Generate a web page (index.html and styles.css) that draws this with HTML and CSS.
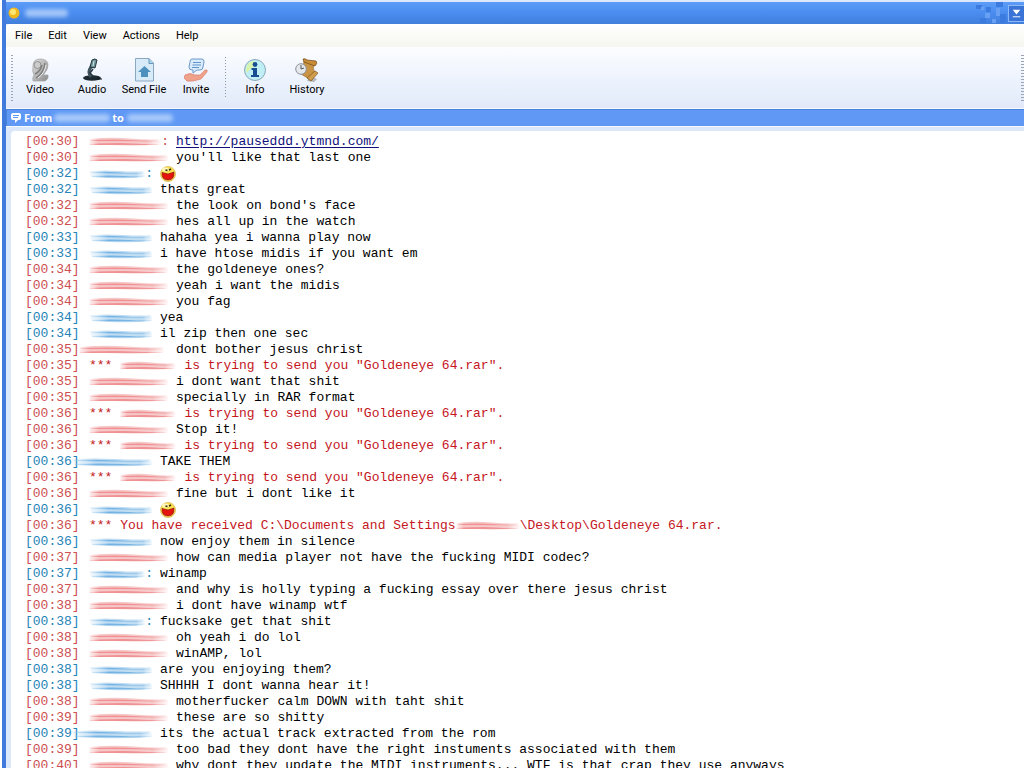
FILE: index.html
```html
<!DOCTYPE html>
<html lang="en">
<head>
<meta charset="utf-8">
<title>Conversation</title>
<link rel="stylesheet" href="styles.css">
<script src="chat.js" defer></script>
</head>
<body>
<svg class="defs" aria-hidden="true">
  <defs>
    <linearGradient id="fadeRed"><stop offset="0" stop-color="#f3a0a0" stop-opacity=".3"/><stop offset=".12" stop-color="#ef8f91"/><stop offset=".8" stop-color="#ef9596"/><stop offset="1" stop-color="#f6b3b3" stop-opacity=".15"/></linearGradient>
    <linearGradient id="fadeBlue"><stop offset="0" stop-color="#8ec4ec" stop-opacity=".2"/><stop offset=".3" stop-color="#74b3e3"/><stop offset=".85" stop-color="#74b3e3"/><stop offset="1" stop-color="#a9d2f2" stop-opacity=".3"/></linearGradient>
    <symbol id="red" viewBox="0 0 80 12" preserveAspectRatio="none">
      <path d="M1 3Q25 1 45 2.500T78 3L80 8.500Q50 10 25 9T0 9.500Z" fill="url(#fadeRed)" opacity=".5"/>
      <path d="M2 4Q30 3 45 4T76 4.500L79 5.500Q50 5 2 5ZM1 8Q35 6.500 50 7.500T78 8L76 9Q40 9 1 9Z" fill="url(#fadeRed)"/>
    </symbol>
    <symbol id="blue" viewBox="0 0 64 12" preserveAspectRatio="none">
      <path d="M0 3Q18 2 35 3T62 3L64 9Q42 11 22 10T3 9Z" fill="url(#fadeBlue)" opacity=".45"/>
      <path d="M2 4Q20 3.500 35 4.500T61 4.500V5.500Q30 5.500 2 5ZM3 8Q25 7 40 8T62 8V9Q30 9.500 3 9Z" fill="url(#fadeBlue)"/>
    </symbol>
    <symbol id="smile" viewBox="0 0 16 16">
      <circle cx="8" cy="8" r="7.500" fill="#f9e04f" stroke="#e3c46a"/>
      <ellipse cx="5.500" cy="3.500" rx="3.500" ry="2" fill="#fff7b8"/>
      <path d="M2 6.500L8 8 14 6Q14.500 14 8 14T2 6.500Z" fill="#e5140f" stroke="#7a1408" stroke-width=".6"/>
      <path d="M5.500 4L7.500 4.500M9 4L11 3" stroke="#3a2b00" stroke-width="1.500"/>
    </symbol>
  </defs>
</svg>
<div class="window">
  <header class="titlebar">
    <svg class="orb" viewBox="0 0 12 12"><circle cx="6" cy="6" r="5.500" fill="#f0b820"/><circle cx="5" cy="5" r="3" fill="#ffe673"/></svg>
    <span class="haze title-haze"></span>
    <svg class="pixels" viewBox="0 0 32 22"><path fill="#3b7bdf" d="M0 3h6v4H0zM10 5h5v5h-5zM20 0h7v5h-7zM4 16h6v5H4zM24 12h6v9h-6z"/><path fill="#68a1f4" d="M9 11h5v5H9zM20 6h4v8h-4zM5 5h3v3H5zM16 17h4v4h-4z"/></svg>
    <button class="min" aria-label="Minimize"><svg viewBox="0 0 16 16"><path d="M4 4h8L8 9Z" fill="#fff"/><path d="M4 11.500h8" stroke="#fff"/></svg></button>
  </header>
  <nav class="menu">
    <button>File</button><button>Edit</button><button>View</button><button>Actions</button><button>Help</button>
  </nav>
  <div class="toolbar">
    <span class="grip"></span>
    <button class="tool"><svg viewBox="0 0 24 24"><defs><linearGradient id="metal" x2="1" y2="1"><stop offset="0" stop-color="#e2e2e2"/><stop offset="1" stop-color="#8b8b8b"/></linearGradient></defs><path d="M5 8Q5 1 12 1Q20 1 20 7Q20 12 15 17L20 17Q21 21 17 23L5 23Q4 20 6 17Q4 14 5 8Z" fill="url(#metal)" stroke="#a2a2a2" stroke-width=".7"/><circle cx="9.500" cy="7" r="3.500" fill="#ccc" stroke="#929292"/><path d="M8 20Q16 15 17 5M7 16Q12 14 14 7" fill="none" stroke="#7c7c7c" stroke-width="1.400"/><path d="M10 20Q17 15 18 7" fill="none" stroke="#ececec"/></svg>Video</button>
    <button class="tool"><svg viewBox="0 0 24 24"><ellipse cx="12" cy="20" rx="9" ry="2.800" fill="#1c2830"/><path d="M17 21H22" stroke="#111"/><path d="M11 19Q7 14 11 9L14 3" fill="none" stroke="#41545d" stroke-width="3"/><path d="M12 2Q15 0 17 2L15 10 10 9Z" fill="#6d9298" stroke="#23343c"/><path d="M13 11L10 15 14 19" fill="none" stroke="#24363f" stroke-width="1.500"/><path d="M14 3L13 8" stroke="#cce8e8"/></svg>Audio</button>
    <button class="tool"><svg viewBox="0 0 24 24"><path d="M3.500 .5H17L21.500 5V23H3.500Z" fill="#d7eaf8" stroke="#8aa8c0"/><path d="M17 .5V5.500H21" fill="#a6d4ef" stroke="#6796b9"/><path d="M12.500 8L19 14H16V19H9V14H6Z" fill="#4c91bd"/></svg>Send File</button>
    <button class="tool"><svg viewBox="0 0 24 24"><path d="M1 17Q6 14 11 17L16 17 21 12Q24 11 23 14L17 21Q8 24 3 23L0 20Z" fill="#efa189" stroke="#d88370" stroke-width=".7"/><path d="M8 1H18Q20 1 20 4L19 9Q19 12 16 12H13L9 15 9 12H8Q5 12 5 9L6 4Q6 1 8 1Z" fill="#d9ebfb" stroke="#6d9acb"/><path d="M9 4.500H17M8.500 7H17M8 9.500H15" stroke="#5e95cd"/></svg>Invite</button>
    <span class="divider"></span>
    <button class="tool"><svg viewBox="0 0 24 24"><circle cx="12" cy="12" r="10.500" fill="#bfeff5" stroke="#8aa9b8"/><path d="M3 13Q3 3 12 3L11 9Q7 10 4 15Z" fill="#d8f3ad"/><circle cx="12" cy="6.500" r="2.400" fill="#164e91"/><path d="M8.500 10H14V17H16V19H8V17H10V12H8.500Z" fill="#164e91"/></svg>Info</button>
    <button class="tool"><svg viewBox="0 0 24 24"><path d="M12 23L19 24 22 21 15 18Z" fill="#777" opacity=".5"/><path d="M9 3L19 6Q17 10 20 15L16 22 6 16Q9 9 9 3Z" fill="#c99443" stroke="#99682b" stroke-width=".7"/><path d="M8 1Q10 0 12 2L21 3Q23 5 20 8L9 4Z" fill="#c98d35" stroke="#70491a" stroke-width=".7"/><path d="M20 13L23 15 16 23 12 20Z" fill="#d19d4a" stroke="#7d5521" stroke-width=".7"/><circle cx="6" cy="11" r="5.300" fill="#e4e8ec" stroke="#8d9399"/><path d="M6 7V11L9 10" fill="none" stroke="#555"/></svg>History</button>
    <span class="grip right"></span>
  </div>
  <div class="banner">
    <svg class="bubble" viewBox="0 0 10 11"><path d="M2 0H8Q10 0 10 2V5Q10 7 8 7H7L4 10V7H2Q0 7 0 5V2Q0 0 2 0Z" fill="#fff"/><path d="M2 2.500H8M2 4.500H7" stroke="#5c98f0"/></svg>
    <b>From</b><span class="haze from-haze"></span><b>to</b><span class="haze to-haze"></span>
  </div>
  <main class="frame"><div class="log" id="log"></div></main>
</div>
</body>
</html>
```
FILE: chat.js
```js
// kind: r = red speaker, b = blue speaker, s = system message, f = received file
// marks: ":" shows the colon, "@" draws the smiley, "<" widens the name stroke leftwards
const lines = [
  ["00:30", "r", "http://pauseddd.ytmnd.com/", ":link"],
  ["00:30", "r", "you'll like that last one"],
  ["00:32", "b", "", ":@"],
  ["00:32", "b", "thats great"],
  ["00:32", "r", "the look on bond's face"],
  ["00:32", "r", "hes all up in the watch"],
  ["00:33", "b", "hahaha yea i wanna play now"],
  ["00:33", "b", "i have htose midis if you want em"],
  ["00:34", "r", "the goldeneye ones?"],
  ["00:34", "r", "yeah i want the midis"],
  ["00:34", "r", "you fag"],
  ["00:34", "b", "yea"],
  ["00:34", "b", "il zip then one sec"],
  ["00:35", "r", "dont bother jesus christ", "<"],
  ["00:35", "s", "is trying to send you \"Goldeneye 64.rar\"."],
  ["00:35", "r", "i dont want that shit"],
  ["00:35", "r", "specially in RAR format"],
  ["00:36", "s", "is trying to send you \"Goldeneye 64.rar\"."],
  ["00:36", "r", "Stop it!"],
  ["00:36", "s", "is trying to send you \"Goldeneye 64.rar\"."],
  ["00:36", "b", "TAKE THEM", "<"],
  ["00:36", "s", "is trying to send you \"Goldeneye 64.rar\"."],
  ["00:36", "r", "fine but i dont like it"],
  ["00:36", "b", "", "@"],
  ["00:36", "f", "\\Desktop\\Goldeneye 64.rar."],
  ["00:36", "b", "now enjoy them in silence"],
  ["00:37", "r", "how can media player not have the fucking MIDI codec?"],
  ["00:37", "b", "winamp", ":"],
  ["00:37", "r", "and why is holly typing a fucking essay over there jesus christ"],
  ["00:38", "r", "i dont have winamp wtf"],
  ["00:38", "b", "fucksake get that shit", ":"],
  ["00:38", "r", "oh yeah i do lol"],
  ["00:38", "r", "winAMP, lol"],
  ["00:38", "b", "are you enjoying them?"],
  ["00:38", "b", "SHHHH I dont wanna hear it!"],
  ["00:38", "r", "motherfucker calm DOWN with taht shit"],
  ["00:39", "r", "these are so shitty"],
  ["00:39", "b", "its the actual track extracted from the rom", "<"],
  ["00:39", "r", "too bad they dont have the right instuments associated with them"],
  ["00:40", "r", "why dont they update the MIDI instruments... WTF is that crap they use anyways"]
];

const stroke = (id) => `<svg class="stroke"><use href="#${id}"/></svg>`;

document.getElementById("log").innerHTML = lines.map(([time, kind, text, marks = ""]) => {
  const blue = kind === "b";
  let body;
  if (kind === "s") {
    body = `<span class="sys">***</span><span class="who">${stroke("red")}</span><span class="sys">${text}</span>`;
  } else if (kind === "f") {
    body = `<span class="sys">*** You have received C:\\Documents and Settings</span><span class="path">${stroke("red")}</span><span class="sys">${text}</span>`;
  } else {
    const colon = marks.includes(":") ? "<i>:</i>" : "";
    const said = marks.includes("link") ? `<a href="${text}">${text}</a>` : text;
    const face = marks.includes("@") ? '<svg class="smile"><use href="#smile"/></svg>' : "";
    body = `<span class="name${marks.includes("<") ? " long" : ""}">${stroke(blue ? "blue" : "red")}${colon}</span><span>${said}${face}</span>`;
  }
  return `<div class="line ${blue ? "blue" : "red"}"><time>[${time}]</time>${body}</div>`;
}).join("");
```
FILE: styles.css
```css
* { box-sizing: border-box; }
body { margin: 0; background: #fff; font: 11px/14px Tahoma, "Noto Sans", sans-serif; color: #000; }
button { border: 0; padding: 0; background: none; font: inherit; color: inherit; }
.defs { position: absolute; width: 0; height: 0; }
.window { height: 100vh; margin-left: 2px; padding-top: 2px; border-left: 4px solid #417add; display: flex; flex-direction: column; overflow: hidden; background: #dbe7fa; }
.window > * { flex-shrink: 0; }

.titlebar { height: 22px; margin-left: -4px; padding-left: 6px; display: flex; align-items: center; background: linear-gradient(#5c9cf7, #4a8cf0 50%, #427fdb); }
.orb { width: 12px; height: 12px; }
.haze { display: block; height: 8px; border-radius: 4px; background: #b9d5fc; filter: blur(2px); opacity: .8; }
.title-haze { width: 43px; margin-left: 5px; }
.pixels { width: 32px; height: 22px; margin-left: auto; }
.min { width: 16px; height: 17px; border: 1px solid #8db9f8; border-right: 0; background: #3974d6; }
.min svg { display: block; width: 15px; height: 15px; }

.menu, .tool { font-family: Tahoma, Roboto, sans-serif; }
.menu { height: 23px; padding-left: 9px; display: flex; align-items: center; gap: 16px; background: linear-gradient(#fff, #f5f6ef); border-radius: 4px 0 0 0; }

.toolbar { height: 62px; padding-left: 5px; display: flex; align-items: center; background: linear-gradient(#fcfdff, #e7effc 75%, #e2e8f8); border-bottom: 1px solid #f4f8ff; }
.grip { width: 2px; height: 46px; background: repeating-linear-gradient(#9da4b4 0 1px, transparent 1px 3px); }
.right { width: 3px; margin-left: auto; }
.divider { width: 1px; height: 42px; margin: 0 3px; background: repeating-linear-gradient(#8f96a8 0 1px, transparent 1px 3px); }
.tool { width: 52px; display: flex; flex-direction: column; align-items: center; gap: 1px; white-space: nowrap; }
.tool:first-of-type { margin-left: 1px; }
.tool svg { width: 24px; height: 24px; }

.banner { height: 17px; padding-left: 4px; display: flex; align-items: center; background: #5f99f5; border: solid #4a82da; border-width: 1px 0 0 1px; color: #fff; }
.bubble { width: 10px; height: 11px; margin-right: 3px; }
.from-haze { width: 56px; margin: 0 2px; }
.to-haze { width: 46px; margin-left: 3px; }

.frame { flex: 1 1 0; min-height: 0; padding: 4px 0 0 5px; background: #dbe8fb; border-top: 1px solid #f4f8ff; overflow: hidden; }
.log { min-height: 100%; padding: 3px 0 0 14px; background: #fff; border-radius: 4px 0 0 0; font: 13px/16px "Courier New", "Liberation Mono", monospace; white-space: pre; }
.line { display: flex; height: 16px; }
.line time { width: 64px; }
.red time, .red i { color: #cc4f52; }
.blue time, .blue i { color: #2583b8; }
.sys { color: #c4161c; }
.stroke { display: block; flex: 1; min-width: 0; width: 100%; height: 12px; }
.name { display: flex; align-items: center; padding-right: 7px; }
.red .name { width: 87px; }
.blue .name { width: 71px; }
.red .name.long { width: 97px; margin-left: -10px; padding-right: 11px; }
.blue .name.long { width: 89px; margin-left: -18px; }
.name i { font-style: normal; }
.who { display: flex; align-items: center; width: 72px; padding: 0 8px; }
.path { display: flex; align-items: center; width: 64px; }
.smile { display: block; width: 16px; height: 16px; }
a { color: #10107c; text-underline-offset: 2px; }
```
